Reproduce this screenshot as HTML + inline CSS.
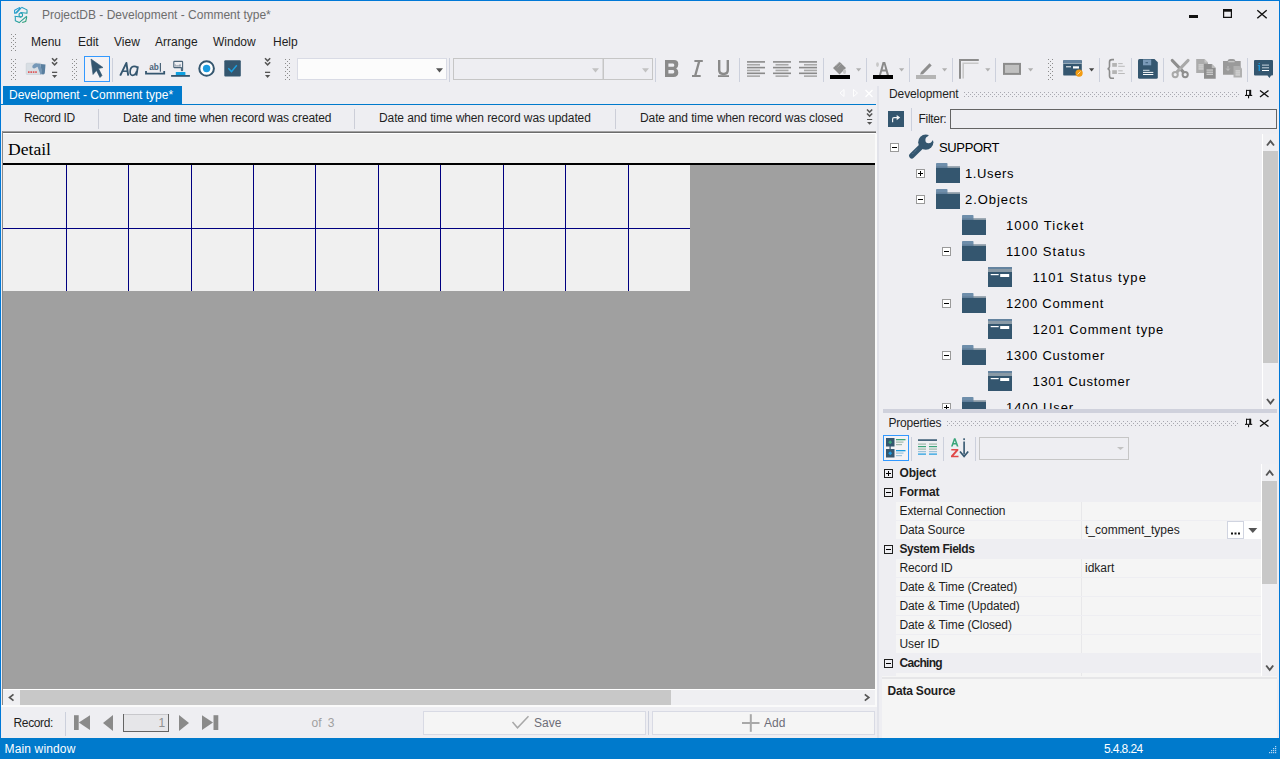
<!DOCTYPE html>
<html><head><meta charset="utf-8">
<style>
*{box-sizing:border-box;margin:0;padding:0}
html,body{width:1280px;height:759px;overflow:hidden;background:#eeeef2;font-family:"Liberation Sans",sans-serif;font-size:12px;color:#1e1e1e}
.a{position:absolute}
.t{position:absolute;white-space:nowrap;line-height:1}
#win{position:absolute;left:0;top:0;width:1280px;height:759px;border:1px solid #0078d7;border-bottom:none;background:#eeeef2}
.grip{position:absolute;width:6px;background-image:radial-gradient(circle at 1px 1px,#999 0.7px,transparent 0.8px);background-size:4px 4px}
.sep{position:absolute;width:1px;background:#ccced8}
</style></head><body>
<div id="win"></div>

<!-- title bar -->
<svg class="a" style="left:10px;top:4px" width="22" height="22" viewBox="10 4 22 22">
 <defs><linearGradient id="lg" x1="14" y1="7" x2="27" y2="23" gradientUnits="userSpaceOnUse"><stop offset="0" stop-color="#1e98e0"/><stop offset="0.55" stop-color="#22a0b0"/><stop offset="1" stop-color="#2d9e62"/></linearGradient></defs>
 <g fill="none" stroke="url(#lg)" stroke-width="1.05" stroke-linejoin="round">
  <path d="M14.6 10.2 L19.4 7.6 L20 8.4 L15.2 13.3 L14.6 13.3 Z"/>
  <path d="M21.6 7.3 L27 9.9 V13.2 L20.6 12.5"/>
  <path d="M16.2 13.4 L21.6 7.3"/>
  <path d="M19.1 14 L20.8 12.8 L22.5 14 V16 L20.8 17.2 L19.1 16 Z"/>
  <path d="M14.5 16.3 L20.6 17.1"/>
  <path d="M15.3 16.8 V20.8 L19.2 22.6 L26.8 16.2"/>
  <path d="M22.2 22.5 L25.7 21.6 L26.8 16.6"/>
 </g>
</svg>
<div class="t" style="left:42px;top:9px;font-size:12px;color:#6d6d6d">ProjectDB - Development - Comment type*</div>
<div class="a" style="left:1189px;top:15px;width:9px;height:3px;background:#111"></div>
<svg class="a" style="left:1222px;top:8px" width="12" height="12"><path d="M1.6 2.6 H9.4 V9.4 H1.6 Z" fill="none" stroke="#111" stroke-width="1.2"/><rect x="1" y="1" width="9" height="2.6" fill="#111"/></svg>
<svg class="a" style="left:1256px;top:9px" width="12" height="11"><path d="M1.3 1.2 L10.7 9.3 M10.7 1.2 L1.3 9.3" stroke="#111" stroke-width="1.4"/></svg>

<!-- menu bar -->
<div class="t" style="left:31px;top:36px">Menu</div>
<div class="t" style="left:78px;top:36px">Edit</div>
<div class="t" style="left:114px;top:36px">View</div>
<div class="t" style="left:155px;top:36px">Arrange</div>
<div class="t" style="left:213px;top:36px">Window</div>
<div class="t" style="left:273px;top:36px">Help</div>

<!-- toolbar -->
<!--TB--><svg class="a" style="left:0;top:0" width="1280" height="90" viewBox="0 0 1280 90"><rect x="11" y="34" width="1" height="1" fill="#8c8c8c"/><rect x="15" y="34" width="1" height="1" fill="#8c8c8c"/><rect x="13" y="36" width="1" height="1" fill="#8c8c8c"/><rect x="11" y="38" width="1" height="1" fill="#8c8c8c"/><rect x="15" y="38" width="1" height="1" fill="#8c8c8c"/><rect x="13" y="40" width="1" height="1" fill="#8c8c8c"/><rect x="11" y="42" width="1" height="1" fill="#8c8c8c"/><rect x="15" y="42" width="1" height="1" fill="#8c8c8c"/><rect x="13" y="44" width="1" height="1" fill="#8c8c8c"/><rect x="11" y="46" width="1" height="1" fill="#8c8c8c"/><rect x="15" y="46" width="1" height="1" fill="#8c8c8c"/><rect x="13" y="48" width="1" height="1" fill="#8c8c8c"/><rect x="11" y="50" width="1" height="1" fill="#8c8c8c"/><rect x="15" y="50" width="1" height="1" fill="#8c8c8c"/><rect x="11" y="59" width="1" height="1" fill="#8c8c8c"/><rect x="15" y="59" width="1" height="1" fill="#8c8c8c"/><rect x="13" y="61" width="1" height="1" fill="#8c8c8c"/><rect x="11" y="63" width="1" height="1" fill="#8c8c8c"/><rect x="15" y="63" width="1" height="1" fill="#8c8c8c"/><rect x="13" y="65" width="1" height="1" fill="#8c8c8c"/><rect x="11" y="67" width="1" height="1" fill="#8c8c8c"/><rect x="15" y="67" width="1" height="1" fill="#8c8c8c"/><rect x="13" y="69" width="1" height="1" fill="#8c8c8c"/><rect x="11" y="71" width="1" height="1" fill="#8c8c8c"/><rect x="15" y="71" width="1" height="1" fill="#8c8c8c"/><rect x="13" y="73" width="1" height="1" fill="#8c8c8c"/><rect x="11" y="75" width="1" height="1" fill="#8c8c8c"/><rect x="15" y="75" width="1" height="1" fill="#8c8c8c"/><rect x="13" y="77" width="1" height="1" fill="#8c8c8c"/><rect x="11" y="79" width="1" height="1" fill="#8c8c8c"/><rect x="15" y="79" width="1" height="1" fill="#8c8c8c"/><rect x="26.2" y="63.2" width="15" height="11.3" rx="0.8" fill="#d8dee4" stroke="#c8ced4" stroke-width="0.6"/><rect x="28" y="71.3" width="1.6" height="1.6" fill="#e04a4a"/><rect x="30.4" y="71.3" width="1.6" height="1.6" fill="#e04a4a"/><rect x="32.8" y="71.3" width="1.6" height="1.6" fill="#e04a4a"/><rect x="35.2" y="71.3" width="1.6" height="1.6" fill="#e04a4a"/><path d="M32.3 67.3 Q32 65.6 33.6 64.4 Q35 63.2 37.2 63.4 L40.2 63.8 L42.2 73.5 Q41.6 74.8 40.4 74.2 L37.5 66.8 L34.8 68.3 Q33 68.8 32.3 67.3 Z" fill="#7598b8"/><path d="M40.5 64.1 L45.5 64.6 L44.8 73.2 Q44 74.8 42 74.3 Z" fill="#5a7f9f"/><path d="M52 58.3 l2.6 2.6 l2.6 -2.6 M52 62.3 l2.6 2.6 l2.6 -2.6" fill="none" stroke="#555" stroke-width="1.5"/><rect x="52" y="71.7" width="5.2" height="1.3" fill="#555"/><path d="M52 75.1 h5.2 l-2.6 2.9 z" fill="#555"/><rect x="72" y="59" width="1" height="1" fill="#8c8c8c"/><rect x="76" y="59" width="1" height="1" fill="#8c8c8c"/><rect x="74" y="61" width="1" height="1" fill="#8c8c8c"/><rect x="72" y="63" width="1" height="1" fill="#8c8c8c"/><rect x="76" y="63" width="1" height="1" fill="#8c8c8c"/><rect x="74" y="65" width="1" height="1" fill="#8c8c8c"/><rect x="72" y="67" width="1" height="1" fill="#8c8c8c"/><rect x="76" y="67" width="1" height="1" fill="#8c8c8c"/><rect x="74" y="69" width="1" height="1" fill="#8c8c8c"/><rect x="72" y="71" width="1" height="1" fill="#8c8c8c"/><rect x="76" y="71" width="1" height="1" fill="#8c8c8c"/><rect x="74" y="73" width="1" height="1" fill="#8c8c8c"/><rect x="72" y="75" width="1" height="1" fill="#8c8c8c"/><rect x="76" y="75" width="1" height="1" fill="#8c8c8c"/><rect x="74" y="77" width="1" height="1" fill="#8c8c8c"/><rect x="72" y="79" width="1" height="1" fill="#8c8c8c"/><rect x="76" y="79" width="1" height="1" fill="#8c8c8c"/><rect x="84.5" y="56.5" width="25" height="25" fill="#f4f2f4" stroke="#3399ff" stroke-width="1"/><path d="M91 59 L103 67.5 L98.5 68.5 L102 75.5 L100 77.5 L96.5 70.5 L93 74.5 Z" fill="#34566f" stroke="#34566f" stroke-width="0.6" stroke-linejoin="round"/><rect x="112" y="58" width="1" height="24" fill="#ccd0dc"/><path d="M120.2 75.6 L126.4 62.9 L128.2 75.6" fill="none" stroke="#34566f" stroke-width="1.9" stroke-linejoin="round"/><path d="M122.6 71.2 H127.6" stroke="#34566f" stroke-width="1.5"/><path d="M137.9 66.3 L136.4 75.6" stroke="#34566f" stroke-width="1.8"/><path d="M137.3 67.5 Q136 66.2 134 66.3 Q130.3 66.6 130.1 71.5 Q130 75.3 132.6 75.3 Q135.6 75.3 136.8 71" fill="none" stroke="#34566f" stroke-width="1.7"/><text x="149.2" y="69.8" font-family="Liberation Sans" font-weight="bold" font-size="8.2" fill="#4a6378">ab</text><rect x="159.8" y="63" width="1.2" height="8.7" fill="#4a6378"/><path d="M146 70.9 V73.7 H164.2 V70.9" fill="none" stroke="#34566f" stroke-width="1.8"/><path d="M174.3 61.4 H182 Q182.6 61.4 182.6 62 V70.2 Q182.6 70.8 182 70.8 Q181.4 70.8 181.4 70.2 V67.6 H174.3 Q173.8 67.6 173.8 67 V62 Q173.8 61.4 174.3 61.4 Z" fill="none" stroke="#4a6378" stroke-width="1.1" stroke-linejoin="round"/><path d="M175.2 64.3 V66.6 M176.2 65.2 V66.6 M177.3 65.2 V66.6 M178.3 65.2 V66.6 M179.4 64.6 V66.6 M180.3 64.3 V66.6" stroke="#6e8192" stroke-width="0.7"/><rect x="175.8" y="71.9" width="9.6" height="3.3" rx="0.5" fill="#0ea0e0"/><rect x="171.1" y="75" width="18.8" height="1.8" fill="#34566f"/><circle cx="206.6" cy="68.5" r="7.3" fill="#fff" stroke="#34566f" stroke-width="2"/><circle cx="206.6" cy="68.5" r="3.7" fill="#1a9be0"/><rect x="224.3" y="60.3" width="16.5" height="16.3" rx="1" fill="#34566f"/><path d="M228.3 68.3 L231.5 71.6 L236.8 65.3" fill="none" stroke="#1ba1e2" stroke-width="1.4"/><path d="M265 58.3 l2.6 2.6 l2.6 -2.6 M265 62.3 l2.6 2.6 l2.6 -2.6" fill="none" stroke="#555" stroke-width="1.5"/><rect x="265" y="71.7" width="5.2" height="1.3" fill="#555"/><path d="M265 75.1 h5.2 l-2.6 2.9 z" fill="#555"/><rect x="285" y="59" width="1" height="1" fill="#8c8c8c"/><rect x="289" y="59" width="1" height="1" fill="#8c8c8c"/><rect x="287" y="61" width="1" height="1" fill="#8c8c8c"/><rect x="285" y="63" width="1" height="1" fill="#8c8c8c"/><rect x="289" y="63" width="1" height="1" fill="#8c8c8c"/><rect x="287" y="65" width="1" height="1" fill="#8c8c8c"/><rect x="285" y="67" width="1" height="1" fill="#8c8c8c"/><rect x="289" y="67" width="1" height="1" fill="#8c8c8c"/><rect x="287" y="69" width="1" height="1" fill="#8c8c8c"/><rect x="285" y="71" width="1" height="1" fill="#8c8c8c"/><rect x="289" y="71" width="1" height="1" fill="#8c8c8c"/><rect x="287" y="73" width="1" height="1" fill="#8c8c8c"/><rect x="285" y="75" width="1" height="1" fill="#8c8c8c"/><rect x="289" y="75" width="1" height="1" fill="#8c8c8c"/><rect x="287" y="77" width="1" height="1" fill="#8c8c8c"/><rect x="285" y="79" width="1" height="1" fill="#8c8c8c"/><rect x="289" y="79" width="1" height="1" fill="#8c8c8c"/><rect x="297.5" y="58.5" width="149" height="21" fill="#fcfcfc" stroke="#d9dbe5"/><path d="M436 68.2 h7 l-3.5 4.2 z" fill="#555"/><rect x="449" y="58" width="1" height="24" fill="#ccd0dc"/><rect x="453.5" y="58.5" width="149.5" height="21" fill="#eeeef2" stroke="#c6c6c6"/><path d="M592 68.2 h7 l-3.5 4.2 z" fill="#c2c2c2"/><rect x="603.5" y="58.5" width="49" height="21" fill="#eeeef2" stroke="#c6c6c6"/><path d="M642 68.2 h7 l-3.5 4.2 z" fill="#c2c2c2"/><rect x="655" y="58" width="1" height="24" fill="#ccd0dc"/><path fill-rule="evenodd" fill="#8a8a8a" d="M665 60 H674 Q678.3 60 678.3 64.2 Q678.3 67.3 676.2 68.4 Q678.3 69.5 678.3 72.6 Q678.3 77 673.5 77 H665 Z M668.4 63.6 V66.8 H673 Q674.3 66.8 674.3 65.2 Q674.3 63.6 673 63.6 Z M668.4 70 V73.4 H673 Q674.3 73.4 674.3 71.7 Q674.3 70 673 70 Z"/><path fill="#8a8a8a" d="M694.4 60 H702.8 V62 H700.2 L696.6 75 H700.7 V77 H692 V75 H694.2 L697.8 62 H694.4 Z"/><path fill="none" stroke="#8a8a8a" stroke-width="2.4" d="M719.2 60 V70 Q719.2 74 723.5 74 Q727.8 74 727.8 70 V60"/><rect x="718" y="75.2" width="11" height="1.8" fill="#8a8a8a"/><rect x="739" y="58" width="1" height="24" fill="#ccd0dc"/><rect x="747" y="61.10" width="18" height="1.6" fill="#8a8a8a"/><rect x="747" y="63.95" width="13" height="1.6" fill="#a8a8a8"/><rect x="747" y="66.80" width="18" height="1.6" fill="#8a8a8a"/><rect x="747" y="69.65" width="13" height="1.6" fill="#a8a8a8"/><rect x="747" y="72.50" width="18" height="1.6" fill="#8a8a8a"/><rect x="747" y="75.35" width="13" height="1.6" fill="#a8a8a8"/><rect x="773" y="61.10" width="18" height="1.6" fill="#8a8a8a"/><rect x="775.5" y="63.95" width="13" height="1.6" fill="#a8a8a8"/><rect x="773" y="66.80" width="18" height="1.6" fill="#8a8a8a"/><rect x="775.5" y="69.65" width="13" height="1.6" fill="#a8a8a8"/><rect x="773" y="72.50" width="18" height="1.6" fill="#8a8a8a"/><rect x="775.5" y="75.35" width="13" height="1.6" fill="#a8a8a8"/><rect x="799" y="61.10" width="18" height="1.6" fill="#8a8a8a"/><rect x="804" y="63.95" width="13" height="1.6" fill="#a8a8a8"/><rect x="799" y="66.80" width="18" height="1.6" fill="#8a8a8a"/><rect x="804" y="69.65" width="13" height="1.6" fill="#a8a8a8"/><rect x="799" y="72.50" width="18" height="1.6" fill="#8a8a8a"/><rect x="804" y="75.35" width="13" height="1.6" fill="#a8a8a8"/><rect x="823" y="58" width="1" height="24" fill="#ccd0dc"/><path d="M833 68 L839.5 61.8 L846 68 L839.5 74.5 Z" fill="#8e8e8e"/><path d="M836 66 l4 -4 M837.5 67.5 l4 -4" stroke="#b0b0b0" stroke-width="0.6"/><ellipse cx="844.5" cy="71.5" rx="1.6" ry="2.6" fill="#c8c8c8"/><rect x="830" y="75" width="20" height="4" fill="#000"/><path d="M856 68.3 h5.2 l-2.6 3.12 z" fill="#b0b0b0"/><rect x="866" y="58" width="1" height="24" fill="#ccd0dc"/><path d="M879 75 L882.6 62 H885.2 L889 75 H886.8 L885.8 71.5 H882 L881 75 Z M882.6 69.5 H885.3 L884 64.5 Z" fill="#8a8a8a" fill-rule="evenodd"/><ellipse cx="877.5" cy="64.6" rx="1.4" ry="2.4" fill="#c8c8c8"/><rect x="873" y="75" width="20" height="4" fill="#000"/><path d="M899 68.3 h5.2 l-2.6 3.12 z" fill="#b0b0b0"/><rect x="909" y="58" width="1" height="24" fill="#ccd0dc"/><path d="M921 72 L929.5 63.2 L931.7 65.5 L923 74.2 L920 74.5 Z" fill="#8e8e8e"/><rect x="916" y="75" width="20" height="4" fill="#b4b4b4"/><path d="M942 68.3 h5.2 l-2.6 3.12 z" fill="#b0b0b0"/><rect x="952" y="58" width="1" height="24" fill="#ccd0dc"/><path d="M960 78.7 V60 H978.8" fill="none" stroke="#8c8c8c" stroke-width="2"/><path d="M963.2 78.5 V63.2 H978.5" fill="none" stroke="#c8c8c8" stroke-width="1.6"/><path d="M985.2 68.3 h5.2 l-2.6 3.12 z" fill="#b0b0b0"/><rect x="995" y="58" width="1" height="24" fill="#ccd0dc"/><rect x="1004" y="63.9" width="16" height="10" fill="#c0c0c0" stroke="#8c8c8c" stroke-width="2"/><path d="M1028 68.3 h5.2 l-2.6 3.12 z" fill="#b0b0b0"/><rect x="1048" y="59" width="1" height="1" fill="#8c8c8c"/><rect x="1052" y="59" width="1" height="1" fill="#8c8c8c"/><rect x="1050" y="61" width="1" height="1" fill="#8c8c8c"/><rect x="1048" y="63" width="1" height="1" fill="#8c8c8c"/><rect x="1052" y="63" width="1" height="1" fill="#8c8c8c"/><rect x="1050" y="65" width="1" height="1" fill="#8c8c8c"/><rect x="1048" y="67" width="1" height="1" fill="#8c8c8c"/><rect x="1052" y="67" width="1" height="1" fill="#8c8c8c"/><rect x="1050" y="69" width="1" height="1" fill="#8c8c8c"/><rect x="1048" y="71" width="1" height="1" fill="#8c8c8c"/><rect x="1052" y="71" width="1" height="1" fill="#8c8c8c"/><rect x="1050" y="73" width="1" height="1" fill="#8c8c8c"/><rect x="1048" y="75" width="1" height="1" fill="#8c8c8c"/><rect x="1052" y="75" width="1" height="1" fill="#8c8c8c"/><rect x="1050" y="77" width="1" height="1" fill="#8c8c8c"/><rect x="1048" y="79" width="1" height="1" fill="#8c8c8c"/><rect x="1052" y="79" width="1" height="1" fill="#8c8c8c"/><rect x="1063.2" y="60" width="18.6" height="15.6" rx="1.2" fill="#34566f"/><rect x="1063.2" y="60" width="18.6" height="3" rx="1" fill="#64839f"/><rect x="1063.2" y="63" width="18.6" height="0.7" fill="#c4d0da"/><rect x="1066" y="66.3" width="5" height="1" fill="#fff"/><rect x="1073" y="66.3" width="6" height="2.2" fill="#fff"/><circle cx="1079.1" cy="73.1" r="3.6" fill="#f39c12"/><path d="M1077.5 74.5 l3 -3" stroke="#fde3b5" stroke-width="1"/><path d="M1089 68.3 h5.2 l-2.6 3.12 z" fill="#444"/><rect x="1099" y="58" width="1" height="24" fill="#ccd0dc"/><path d="M1114 59.6 H1112 Q1109.5 59.6 1109.5 62 V66.5 Q1109.5 68.5 1107.6 68.8 Q1109.5 69.2 1109.5 71.2 V76 Q1109.5 78.3 1112 78.3 H1114" fill="none" stroke="#8c8c8c" stroke-width="1.6"/><rect x="1112.2" y="63" width="4.7" height="3.8" fill="#b4b4b4"/><rect x="1112.2" y="70.2" width="4.7" height="3.8" fill="#b4b4b4"/><rect x="1118.2" y="63.2" width="4.5" height="0.9" fill="#b4b4b4"/><rect x="1118.2" y="65.8" width="6.6" height="0.9" fill="#b4b4b4"/><rect x="1118.2" y="70.4" width="4.5" height="0.9" fill="#b4b4b4"/><rect x="1118.2" y="73" width="6.6" height="0.9" fill="#b4b4b4"/><rect x="1131" y="58" width="1" height="24" fill="#ccd0dc"/><path d="M1139.5 59 H1154.5 L1157.8 62.3 V77.2 Q1157.8 78.7 1156.3 78.7 H1139.5 Q1138 78.7 1138 77.2 V60.5 Q1138 59 1139.5 59 Z" fill="#34566f"/><rect x="1143" y="59.5" width="8.2" height="5.8" fill="#7a9ab8"/><rect x="1145.5" y="62.3" width="2.5" height="0.9" fill="#34566f"/><rect x="1143" y="69.8" width="6.5" height="1" fill="#d6e0e8"/><rect x="1143" y="71.9" width="10.3" height="1" fill="#fff"/><rect x="1143" y="74" width="10.3" height="1" fill="#fff"/><rect x="1163" y="58" width="1" height="24" fill="#ccd0dc"/><path d="M1172.3 60.5 L1183 71.6" stroke="#8e8e8e" stroke-width="3.2" stroke-linecap="round"/><path d="M1188 60.5 L1177.3 71.6" stroke="#a8a8a8" stroke-width="3.2" stroke-linecap="round"/><circle cx="1175.2" cy="74.6" r="2.6" fill="none" stroke="#a8a8a8" stroke-width="2"/><circle cx="1185.2" cy="74.6" r="2.6" fill="none" stroke="#8e8e8e" stroke-width="2"/><circle cx="1180.2" cy="69" r="0.7" fill="#c8c8c8"/><path d="M1196.2 59 H1204.5 L1208 62.5 V73 H1196.2 Z" fill="#acacac"/><path d="M1204.5 59 V62.5 H1208 Z" fill="#c8c8c8"/><rect x="1198.5" y="64.5" width="5" height="0.9" fill="#e8e8e8"/><rect x="1198.5" y="66.5" width="5" height="0.9" fill="#e8e8e8"/><rect x="1198.5" y="68.5" width="5" height="0.9" fill="#e8e8e8"/><path d="M1204 64 H1211.8 L1215.7 67.9 V78.7 H1204 Z" fill="#8e8e8e"/><path d="M1211.8 64 V67.9 H1215.7 Z" fill="#bdbdbd"/><rect x="1206.5" y="69.6" width="6.5" height="0.9" fill="#e6e6e6"/><rect x="1206.5" y="71.7" width="6.5" height="0.9" fill="#e6e6e6"/><rect x="1206.5" y="73.8" width="6.5" height="0.9" fill="#e6e6e6"/><path d="M1223 61 H1227.5 Q1228 59 1230 59 H1233 Q1235 59 1235.5 61 H1240.7 V74.8 H1223 Z" fill="#9a9a9a"/><rect x="1228.3" y="61" width="6.3" height="1.3" fill="#c6c6c6"/><path d="M1228 66 V70.2 M1226.3 68.6 L1228 70.5 L1229.7 68.6" stroke="#c8c8c8" stroke-width="0.8" fill="none"/><path d="M1233.5 66 H1239.5 L1242 68.5 V77.6 H1233.5 Z" fill="#b0b0b0"/><rect x="1235.5" y="70.5" width="4.5" height="0.9" fill="#e8e8e8"/><rect x="1235.5" y="72.5" width="4.5" height="0.9" fill="#e8e8e8"/><rect x="1235.5" y="74.5" width="4.5" height="0.9" fill="#e8e8e8"/><rect x="1247" y="58" width="1" height="24" fill="#ccd0dc"/><path d="M1255 60 H1272 Q1273 60 1273 61 V74.6 Q1273 75.6 1272 75.6 H1271 L1269.5 78 L1267.5 75.6 H1255 Q1254 75.6 1254 74.6 V61 Q1254 60 1255 60 Z" fill="#34566f"/><rect x="1258.6" y="65" width="1.3" height="6" fill="#1a9be0"/><rect x="1258.6" y="63" width="1.3" height="1" fill="#1a9be0"/><rect x="1257.8" y="65" width="1.2" height="0.9" fill="#1a9be0"/><rect x="1262" y="64.6" width="7" height="1" fill="#c9d5df"/><rect x="1262" y="67.3" width="7" height="1" fill="#c9d5df"/><rect x="1262" y="70" width="7" height="1" fill="#fff"/></svg><!--/TB-->

<!-- document tab -->
<div class="a" style="left:3px;top:86px;width:179px;height:18px;background:#007acc"></div>
<div class="t" style="left:9px;top:89px;color:#fff">Development - Comment type*</div>
<div class="a" style="left:0;top:104px;width:876px;height:2px;background:#007acc"></div>

<!-- header row -->
<div class="a" style="left:1px;top:105px;width:875px;height:26px;background:#eeeef2"></div>
<div class="t" style="left:24px;top:112px;letter-spacing:-0.35px">Record ID</div>
<div class="sep" style="left:98px;top:109px;height:20px"></div>
<div class="t" style="left:123px;top:112px;letter-spacing:-0.1px">Date and time when record was created</div>
<div class="sep" style="left:354px;top:109px;height:20px"></div>
<div class="t" style="left:379px;top:112px;letter-spacing:-0.1px">Date and time when record was updated</div>
<div class="sep" style="left:615px;top:109px;height:20px"></div>
<div class="t" style="left:640px;top:112px;letter-spacing:-0.1px">Date and time when record was closed</div>
<svg class="a" style="left:866px;top:108px" width="8" height="20" viewBox="0 0 8 20"><path d="M1 1.5 L3.6 4.1 L6.2 1.5 M1 5.5 L3.6 8.1 L6.2 5.5" fill="none" stroke="#555" stroke-width="1.5"/><rect x="1" y="11" width="5.2" height="1" fill="#555"/><path d="M1 13.9 H6.2 L3.6 16.8 Z" fill="#555"/></svg>


<!-- designer -->
<div class="a" style="left:2px;top:131px;width:874px;height:1px;background:#a2a2a2"></div><div class="a" style="left:2px;top:132px;width:874px;height:1px;background:#6c6c6c"></div>
<div class="a" style="left:2px;top:131px;width:1px;height:574px;background:#8a8a8a"></div>
<div class="a" style="left:3px;top:133px;width:873px;height:1px;background:#fff"></div>
<div class="a" style="left:3px;top:134px;width:872px;height:29px;background:#f0f0f0"></div>
<div class="t" style="left:8px;top:140.5px;font-family:'Liberation Serif',serif;font-size:17.6px;color:#000">Detail</div>
<div class="a" style="left:3px;top:163px;width:873px;height:2px;background:#000"></div>
<div class="a" style="left:3px;top:165px;width:873px;height:524px;background:#a0a0a0"></div>
<div class="a" style="left:3px;top:165px;width:687px;height:126px;background:#f0f0f0"></div>
<div class="a" style="left:3px;top:228px;width:687px;height:1px;background:#000080"></div>
<div class="a" style="left:66px;top:165px;width:1px;height:126px;background:#000080"></div>
<div class="a" style="left:128px;top:165px;width:1px;height:126px;background:#000080"></div>
<div class="a" style="left:191px;top:165px;width:1px;height:126px;background:#000080"></div>
<div class="a" style="left:253px;top:165px;width:1px;height:126px;background:#000080"></div>
<div class="a" style="left:315px;top:165px;width:1px;height:126px;background:#000080"></div>
<div class="a" style="left:378px;top:165px;width:1px;height:126px;background:#000080"></div>
<div class="a" style="left:440px;top:165px;width:1px;height:126px;background:#000080"></div>
<div class="a" style="left:503px;top:165px;width:1px;height:126px;background:#000080"></div>
<div class="a" style="left:565px;top:165px;width:1px;height:126px;background:#000080"></div>
<div class="a" style="left:628px;top:165px;width:1px;height:126px;background:#000080"></div>


<!-- nav -->
<!--N--><svg class="a" style="left:0;top:0" width="880" height="759" viewBox="0 0 880 759">
<rect x="3" y="689" width="873" height="1" fill="#fff"/>
<rect x="3" y="690" width="872" height="15" fill="#efeff2"/>
<rect x="20" y="690" width="651" height="15" fill="#c8c8c8"/>
<path d="M13.5 694.3 L9.5 697.5 L13.5 700.7" fill="none" stroke="#555" stroke-width="1.7"/>
<path d="M864.8 694.3 L868.8 697.5 L864.8 700.7" fill="none" stroke="#555" stroke-width="1.7"/>
<rect x="875" y="134" width="2" height="573" fill="#fafafa"/>
<rect x="1" y="705" width="876" height="2" fill="#fafafa"/>
<rect x="65" y="712" width="1" height="24" fill="#ccd0dc"/>
<rect x="74" y="715.2" width="4.7" height="14.8" fill="#8a8a8a"/><path d="M78.8 722.6 L90 715.2 V730 Z" fill="#8a8a8a"/>
<path d="M103 723 L113 715 V731 Z" fill="#8a8a8a"/>
<rect x="123.5" y="714.5" width="45" height="17" fill="#e6e6e9" stroke="#646464"/>
<rect x="124" y="714" width="44" height="1" fill="#c8c8cc"/>
<path d="M179 715 L189 723 L179 731 Z" fill="#8a8a8a"/>
<path d="M202 715.2 L213 722.6 L202 730 Z" fill="#8a8a8a"/><rect x="213.5" y="715.2" width="4.8" height="14.8" fill="#8a8a8a"/>
<rect x="423.5" y="711.5" width="222" height="23" fill="#f5f5f5" stroke="#d8dae4"/>
<path d="M512.5 722 L517.5 727.8 L528.5 716.3" fill="none" stroke="#a8a8a8" stroke-width="1.5"/>
<rect x="648" y="711" width="1" height="24" fill="#ccd0dc"/>
<rect x="652.5" y="711.5" width="222" height="23" fill="#f5f5f5" stroke="#d8dae4"/>
<rect x="742" y="722" width="17.5" height="2" fill="#a8a8a8"/><rect x="749.8" y="714.2" width="2" height="17.6" fill="#a8a8a8"/>
<path d="M844 89.5 L840 93 L844 96.5 Z" fill="none" stroke="#fff" stroke-width="0.9"/>
<path d="M853.5 89.5 L857.5 93 L853.5 96.5 Z" fill="none" stroke="#fff" stroke-width="0.9"/>
<path d="M865.5 90 L872.5 97 M872.5 90 L865.5 97" stroke="#fff" stroke-width="1.3"/>
</svg>
<div class="t" style="left:13.5px;top:716.6px;letter-spacing:-0.35px">Record:</div>
<div class="t" style="left:158.5px;top:716.5px;color:#909090">1</div>
<div class="t" style="left:311.5px;top:717px;color:#a0a0a0;word-spacing:3px">of 3</div>
<div class="t" style="left:534px;top:716.7px;color:#6d6d78">Save</div>
<div class="t" style="left:764px;top:716.7px;color:#6d6d78">Add</div>
<!--/N-->

<!-- right panel -->
<!--R--><svg class="a" style="left:0;top:0" width="1280" height="759" viewBox="0 0 1280 759"><rect x="877" y="86" width="2" height="652" fill="#e2e3ea"/><rect x="964" y="92" width="1" height="1" fill="#a8a8b0"/><rect x="968" y="92" width="1" height="1" fill="#a8a8b0"/><rect x="972" y="92" width="1" height="1" fill="#a8a8b0"/><rect x="976" y="92" width="1" height="1" fill="#a8a8b0"/><rect x="980" y="92" width="1" height="1" fill="#a8a8b0"/><rect x="984" y="92" width="1" height="1" fill="#a8a8b0"/><rect x="988" y="92" width="1" height="1" fill="#a8a8b0"/><rect x="992" y="92" width="1" height="1" fill="#a8a8b0"/><rect x="996" y="92" width="1" height="1" fill="#a8a8b0"/><rect x="1000" y="92" width="1" height="1" fill="#a8a8b0"/><rect x="1004" y="92" width="1" height="1" fill="#a8a8b0"/><rect x="1008" y="92" width="1" height="1" fill="#a8a8b0"/><rect x="1012" y="92" width="1" height="1" fill="#a8a8b0"/><rect x="1016" y="92" width="1" height="1" fill="#a8a8b0"/><rect x="1020" y="92" width="1" height="1" fill="#a8a8b0"/><rect x="1024" y="92" width="1" height="1" fill="#a8a8b0"/><rect x="1028" y="92" width="1" height="1" fill="#a8a8b0"/><rect x="1032" y="92" width="1" height="1" fill="#a8a8b0"/><rect x="1036" y="92" width="1" height="1" fill="#a8a8b0"/><rect x="1040" y="92" width="1" height="1" fill="#a8a8b0"/><rect x="1044" y="92" width="1" height="1" fill="#a8a8b0"/><rect x="1048" y="92" width="1" height="1" fill="#a8a8b0"/><rect x="1052" y="92" width="1" height="1" fill="#a8a8b0"/><rect x="1056" y="92" width="1" height="1" fill="#a8a8b0"/><rect x="1060" y="92" width="1" height="1" fill="#a8a8b0"/><rect x="1064" y="92" width="1" height="1" fill="#a8a8b0"/><rect x="1068" y="92" width="1" height="1" fill="#a8a8b0"/><rect x="1072" y="92" width="1" height="1" fill="#a8a8b0"/><rect x="1076" y="92" width="1" height="1" fill="#a8a8b0"/><rect x="1080" y="92" width="1" height="1" fill="#a8a8b0"/><rect x="1084" y="92" width="1" height="1" fill="#a8a8b0"/><rect x="1088" y="92" width="1" height="1" fill="#a8a8b0"/><rect x="1092" y="92" width="1" height="1" fill="#a8a8b0"/><rect x="1096" y="92" width="1" height="1" fill="#a8a8b0"/><rect x="1100" y="92" width="1" height="1" fill="#a8a8b0"/><rect x="1104" y="92" width="1" height="1" fill="#a8a8b0"/><rect x="1108" y="92" width="1" height="1" fill="#a8a8b0"/><rect x="1112" y="92" width="1" height="1" fill="#a8a8b0"/><rect x="1116" y="92" width="1" height="1" fill="#a8a8b0"/><rect x="1120" y="92" width="1" height="1" fill="#a8a8b0"/><rect x="1124" y="92" width="1" height="1" fill="#a8a8b0"/><rect x="1128" y="92" width="1" height="1" fill="#a8a8b0"/><rect x="1132" y="92" width="1" height="1" fill="#a8a8b0"/><rect x="1136" y="92" width="1" height="1" fill="#a8a8b0"/><rect x="1140" y="92" width="1" height="1" fill="#a8a8b0"/><rect x="1144" y="92" width="1" height="1" fill="#a8a8b0"/><rect x="1148" y="92" width="1" height="1" fill="#a8a8b0"/><rect x="1152" y="92" width="1" height="1" fill="#a8a8b0"/><rect x="1156" y="92" width="1" height="1" fill="#a8a8b0"/><rect x="1160" y="92" width="1" height="1" fill="#a8a8b0"/><rect x="1164" y="92" width="1" height="1" fill="#a8a8b0"/><rect x="1168" y="92" width="1" height="1" fill="#a8a8b0"/><rect x="1172" y="92" width="1" height="1" fill="#a8a8b0"/><rect x="1176" y="92" width="1" height="1" fill="#a8a8b0"/><rect x="1180" y="92" width="1" height="1" fill="#a8a8b0"/><rect x="1184" y="92" width="1" height="1" fill="#a8a8b0"/><rect x="1188" y="92" width="1" height="1" fill="#a8a8b0"/><rect x="1192" y="92" width="1" height="1" fill="#a8a8b0"/><rect x="1196" y="92" width="1" height="1" fill="#a8a8b0"/><rect x="1200" y="92" width="1" height="1" fill="#a8a8b0"/><rect x="1204" y="92" width="1" height="1" fill="#a8a8b0"/><rect x="1208" y="92" width="1" height="1" fill="#a8a8b0"/><rect x="1212" y="92" width="1" height="1" fill="#a8a8b0"/><rect x="1216" y="92" width="1" height="1" fill="#a8a8b0"/><rect x="1220" y="92" width="1" height="1" fill="#a8a8b0"/><rect x="1224" y="92" width="1" height="1" fill="#a8a8b0"/><rect x="1228" y="92" width="1" height="1" fill="#a8a8b0"/><rect x="1232" y="92" width="1" height="1" fill="#a8a8b0"/><rect x="1236" y="92" width="1" height="1" fill="#a8a8b0"/><rect x="966" y="94" width="1" height="1" fill="#a8a8b0"/><rect x="970" y="94" width="1" height="1" fill="#a8a8b0"/><rect x="974" y="94" width="1" height="1" fill="#a8a8b0"/><rect x="978" y="94" width="1" height="1" fill="#a8a8b0"/><rect x="982" y="94" width="1" height="1" fill="#a8a8b0"/><rect x="986" y="94" width="1" height="1" fill="#a8a8b0"/><rect x="990" y="94" width="1" height="1" fill="#a8a8b0"/><rect x="994" y="94" width="1" height="1" fill="#a8a8b0"/><rect x="998" y="94" width="1" height="1" fill="#a8a8b0"/><rect x="1002" y="94" width="1" height="1" fill="#a8a8b0"/><rect x="1006" y="94" width="1" height="1" fill="#a8a8b0"/><rect x="1010" y="94" width="1" height="1" fill="#a8a8b0"/><rect x="1014" y="94" width="1" height="1" fill="#a8a8b0"/><rect x="1018" y="94" width="1" height="1" fill="#a8a8b0"/><rect x="1022" y="94" width="1" height="1" fill="#a8a8b0"/><rect x="1026" y="94" width="1" height="1" fill="#a8a8b0"/><rect x="1030" y="94" width="1" height="1" fill="#a8a8b0"/><rect x="1034" y="94" width="1" height="1" fill="#a8a8b0"/><rect x="1038" y="94" width="1" height="1" fill="#a8a8b0"/><rect x="1042" y="94" width="1" height="1" fill="#a8a8b0"/><rect x="1046" y="94" width="1" height="1" fill="#a8a8b0"/><rect x="1050" y="94" width="1" height="1" fill="#a8a8b0"/><rect x="1054" y="94" width="1" height="1" fill="#a8a8b0"/><rect x="1058" y="94" width="1" height="1" fill="#a8a8b0"/><rect x="1062" y="94" width="1" height="1" fill="#a8a8b0"/><rect x="1066" y="94" width="1" height="1" fill="#a8a8b0"/><rect x="1070" y="94" width="1" height="1" fill="#a8a8b0"/><rect x="1074" y="94" width="1" height="1" fill="#a8a8b0"/><rect x="1078" y="94" width="1" height="1" fill="#a8a8b0"/><rect x="1082" y="94" width="1" height="1" fill="#a8a8b0"/><rect x="1086" y="94" width="1" height="1" fill="#a8a8b0"/><rect x="1090" y="94" width="1" height="1" fill="#a8a8b0"/><rect x="1094" y="94" width="1" height="1" fill="#a8a8b0"/><rect x="1098" y="94" width="1" height="1" fill="#a8a8b0"/><rect x="1102" y="94" width="1" height="1" fill="#a8a8b0"/><rect x="1106" y="94" width="1" height="1" fill="#a8a8b0"/><rect x="1110" y="94" width="1" height="1" fill="#a8a8b0"/><rect x="1114" y="94" width="1" height="1" fill="#a8a8b0"/><rect x="1118" y="94" width="1" height="1" fill="#a8a8b0"/><rect x="1122" y="94" width="1" height="1" fill="#a8a8b0"/><rect x="1126" y="94" width="1" height="1" fill="#a8a8b0"/><rect x="1130" y="94" width="1" height="1" fill="#a8a8b0"/><rect x="1134" y="94" width="1" height="1" fill="#a8a8b0"/><rect x="1138" y="94" width="1" height="1" fill="#a8a8b0"/><rect x="1142" y="94" width="1" height="1" fill="#a8a8b0"/><rect x="1146" y="94" width="1" height="1" fill="#a8a8b0"/><rect x="1150" y="94" width="1" height="1" fill="#a8a8b0"/><rect x="1154" y="94" width="1" height="1" fill="#a8a8b0"/><rect x="1158" y="94" width="1" height="1" fill="#a8a8b0"/><rect x="1162" y="94" width="1" height="1" fill="#a8a8b0"/><rect x="1166" y="94" width="1" height="1" fill="#a8a8b0"/><rect x="1170" y="94" width="1" height="1" fill="#a8a8b0"/><rect x="1174" y="94" width="1" height="1" fill="#a8a8b0"/><rect x="1178" y="94" width="1" height="1" fill="#a8a8b0"/><rect x="1182" y="94" width="1" height="1" fill="#a8a8b0"/><rect x="1186" y="94" width="1" height="1" fill="#a8a8b0"/><rect x="1190" y="94" width="1" height="1" fill="#a8a8b0"/><rect x="1194" y="94" width="1" height="1" fill="#a8a8b0"/><rect x="1198" y="94" width="1" height="1" fill="#a8a8b0"/><rect x="1202" y="94" width="1" height="1" fill="#a8a8b0"/><rect x="1206" y="94" width="1" height="1" fill="#a8a8b0"/><rect x="1210" y="94" width="1" height="1" fill="#a8a8b0"/><rect x="1214" y="94" width="1" height="1" fill="#a8a8b0"/><rect x="1218" y="94" width="1" height="1" fill="#a8a8b0"/><rect x="1222" y="94" width="1" height="1" fill="#a8a8b0"/><rect x="1226" y="94" width="1" height="1" fill="#a8a8b0"/><rect x="1230" y="94" width="1" height="1" fill="#a8a8b0"/><rect x="1234" y="94" width="1" height="1" fill="#a8a8b0"/><rect x="1238" y="94" width="1" height="1" fill="#a8a8b0"/><rect x="964" y="96" width="1" height="1" fill="#a8a8b0"/><rect x="968" y="96" width="1" height="1" fill="#a8a8b0"/><rect x="972" y="96" width="1" height="1" fill="#a8a8b0"/><rect x="976" y="96" width="1" height="1" fill="#a8a8b0"/><rect x="980" y="96" width="1" height="1" fill="#a8a8b0"/><rect x="984" y="96" width="1" height="1" fill="#a8a8b0"/><rect x="988" y="96" width="1" height="1" fill="#a8a8b0"/><rect x="992" y="96" width="1" height="1" fill="#a8a8b0"/><rect x="996" y="96" width="1" height="1" fill="#a8a8b0"/><rect x="1000" y="96" width="1" height="1" fill="#a8a8b0"/><rect x="1004" y="96" width="1" height="1" fill="#a8a8b0"/><rect x="1008" y="96" width="1" height="1" fill="#a8a8b0"/><rect x="1012" y="96" width="1" height="1" fill="#a8a8b0"/><rect x="1016" y="96" width="1" height="1" fill="#a8a8b0"/><rect x="1020" y="96" width="1" height="1" fill="#a8a8b0"/><rect x="1024" y="96" width="1" height="1" fill="#a8a8b0"/><rect x="1028" y="96" width="1" height="1" fill="#a8a8b0"/><rect x="1032" y="96" width="1" height="1" fill="#a8a8b0"/><rect x="1036" y="96" width="1" height="1" fill="#a8a8b0"/><rect x="1040" y="96" width="1" height="1" fill="#a8a8b0"/><rect x="1044" y="96" width="1" height="1" fill="#a8a8b0"/><rect x="1048" y="96" width="1" height="1" fill="#a8a8b0"/><rect x="1052" y="96" width="1" height="1" fill="#a8a8b0"/><rect x="1056" y="96" width="1" height="1" fill="#a8a8b0"/><rect x="1060" y="96" width="1" height="1" fill="#a8a8b0"/><rect x="1064" y="96" width="1" height="1" fill="#a8a8b0"/><rect x="1068" y="96" width="1" height="1" fill="#a8a8b0"/><rect x="1072" y="96" width="1" height="1" fill="#a8a8b0"/><rect x="1076" y="96" width="1" height="1" fill="#a8a8b0"/><rect x="1080" y="96" width="1" height="1" fill="#a8a8b0"/><rect x="1084" y="96" width="1" height="1" fill="#a8a8b0"/><rect x="1088" y="96" width="1" height="1" fill="#a8a8b0"/><rect x="1092" y="96" width="1" height="1" fill="#a8a8b0"/><rect x="1096" y="96" width="1" height="1" fill="#a8a8b0"/><rect x="1100" y="96" width="1" height="1" fill="#a8a8b0"/><rect x="1104" y="96" width="1" height="1" fill="#a8a8b0"/><rect x="1108" y="96" width="1" height="1" fill="#a8a8b0"/><rect x="1112" y="96" width="1" height="1" fill="#a8a8b0"/><rect x="1116" y="96" width="1" height="1" fill="#a8a8b0"/><rect x="1120" y="96" width="1" height="1" fill="#a8a8b0"/><rect x="1124" y="96" width="1" height="1" fill="#a8a8b0"/><rect x="1128" y="96" width="1" height="1" fill="#a8a8b0"/><rect x="1132" y="96" width="1" height="1" fill="#a8a8b0"/><rect x="1136" y="96" width="1" height="1" fill="#a8a8b0"/><rect x="1140" y="96" width="1" height="1" fill="#a8a8b0"/><rect x="1144" y="96" width="1" height="1" fill="#a8a8b0"/><rect x="1148" y="96" width="1" height="1" fill="#a8a8b0"/><rect x="1152" y="96" width="1" height="1" fill="#a8a8b0"/><rect x="1156" y="96" width="1" height="1" fill="#a8a8b0"/><rect x="1160" y="96" width="1" height="1" fill="#a8a8b0"/><rect x="1164" y="96" width="1" height="1" fill="#a8a8b0"/><rect x="1168" y="96" width="1" height="1" fill="#a8a8b0"/><rect x="1172" y="96" width="1" height="1" fill="#a8a8b0"/><rect x="1176" y="96" width="1" height="1" fill="#a8a8b0"/><rect x="1180" y="96" width="1" height="1" fill="#a8a8b0"/><rect x="1184" y="96" width="1" height="1" fill="#a8a8b0"/><rect x="1188" y="96" width="1" height="1" fill="#a8a8b0"/><rect x="1192" y="96" width="1" height="1" fill="#a8a8b0"/><rect x="1196" y="96" width="1" height="1" fill="#a8a8b0"/><rect x="1200" y="96" width="1" height="1" fill="#a8a8b0"/><rect x="1204" y="96" width="1" height="1" fill="#a8a8b0"/><rect x="1208" y="96" width="1" height="1" fill="#a8a8b0"/><rect x="1212" y="96" width="1" height="1" fill="#a8a8b0"/><rect x="1216" y="96" width="1" height="1" fill="#a8a8b0"/><rect x="1220" y="96" width="1" height="1" fill="#a8a8b0"/><rect x="1224" y="96" width="1" height="1" fill="#a8a8b0"/><rect x="1228" y="96" width="1" height="1" fill="#a8a8b0"/><rect x="1232" y="96" width="1" height="1" fill="#a8a8b0"/><rect x="1236" y="96" width="1" height="1" fill="#a8a8b0"/><rect x="1246" y="89.89999999999999" width="1" height="5.2" fill="#111"/><rect x="1249.2" y="89.89999999999999" width="2" height="5.2" fill="#111"/><rect x="1246" y="89.89999999999999" width="5" height="1" fill="#111"/><rect x="1245" y="94.89999999999999" width="7.2" height="1.1" fill="#111"/><rect x="1248" y="95.89999999999999" width="1.1" height="2.4" fill="#111"/><path d="M1260 90.5 L1268.5 97.0 M1268.5 90.5 L1260 97.0" stroke="#111" stroke-width="1.35"/><rect x="888" y="111" width="16" height="16" fill="#34566f"/><path d="M892.6 122.2 V119 Q892.6 117.6 894 117.6 H897.5" fill="none" stroke="#f2f4f6" stroke-width="1.2"/><path d="M896.7 114.9 L900.2 117.6 L896.7 120.3 Z" fill="#f2f4f6"/><rect x="911" y="108" width="1" height="23" fill="#ccd0dc"/><rect x="950.5" y="109.5" width="326" height="19" fill="#eeeef2" stroke="#646464"/><rect x="1262" y="134" width="1" height="275" fill="#fff"/><rect x="1263" y="134" width="15" height="275" fill="#efeff2"/><rect x="1263" y="151" width="15" height="212" fill="#c8c8c8"/><path d="M1267 145.5 L1270.5 141 L1274 145.5" fill="none" stroke="#555" stroke-width="1.9"/><path d="M1267 399 L1270.5 403.5 L1274 399" fill="none" stroke="#555" stroke-width="1.9"/><defs><mask id="wm" maskUnits="userSpaceOnUse" x="900" y="128" width="40" height="34"><rect x="900" y="128" width="40" height="34" fill="#fff"/><circle cx="928.6" cy="140" r="3.2" fill="#000"/><path d="M926.3 137.7 L931 133 L935.6 137.6 L930.9 142.3 Z" fill="#000"/></mask></defs><g mask="url(#wm)"><circle cx="925.8" cy="142.2" r="7.6" fill="#34566f"/><path d="M911.8 155.8 L921.5 146.3" stroke="#34566f" stroke-width="5.4" stroke-linecap="round"/></g><path d="M912.5 153.8 L917.6 148.8" stroke="#7d9ab3" stroke-width="0.6" stroke-dasharray="1.2 0.6"/><rect x="890.5" y="143.5" width="8" height="8" fill="#fff" stroke="#9a9a9a"/><rect x="892" y="147" width="5" height="1" fill="#000"/><rect x="916.5" y="169.5" width="8" height="8" fill="#fff" stroke="#9a9a9a"/><rect x="918" y="173" width="5" height="1" fill="#000"/><rect x="920" y="171" width="1" height="5" fill="#000"/><rect x="916.5" y="195.5" width="8" height="8" fill="#fff" stroke="#9a9a9a"/><rect x="918" y="199" width="5" height="1" fill="#000"/><rect x="942.5" y="247.5" width="8" height="8" fill="#fff" stroke="#9a9a9a"/><rect x="944" y="251" width="5" height="1" fill="#000"/><rect x="942.5" y="299.5" width="8" height="8" fill="#fff" stroke="#9a9a9a"/><rect x="944" y="303" width="5" height="1" fill="#000"/><rect x="942.5" y="351.5" width="8" height="8" fill="#fff" stroke="#9a9a9a"/><rect x="944" y="355" width="5" height="1" fill="#000"/><rect x="942.5" y="403.5" width="8" height="8" fill="#fff" stroke="#9a9a9a"/><rect x="944" y="407" width="5" height="1" fill="#000"/><rect x="946" y="405" width="1" height="5" fill="#000"/><rect x="936" y="163" width="11.5" height="3.5" rx="0.8" fill="#6e8eab"/><rect x="936" y="166.2" width="24" height="2" fill="#8a9aa6"/><rect x="936" y="166.2" width="11.5" height="2" fill="#5f7f9c"/><rect x="936" y="168" width="24" height="15" fill="#34566f"/><rect x="936" y="189" width="11.5" height="3.5" rx="0.8" fill="#6e8eab"/><rect x="936" y="192.2" width="24" height="2" fill="#8a9aa6"/><rect x="936" y="192.2" width="11.5" height="2" fill="#5f7f9c"/><rect x="936" y="194" width="24" height="15" fill="#34566f"/><rect x="962" y="215" width="11.5" height="3.5" rx="0.8" fill="#6e8eab"/><rect x="962" y="218.2" width="24" height="2" fill="#8a9aa6"/><rect x="962" y="218.2" width="11.5" height="2" fill="#5f7f9c"/><rect x="962" y="220" width="24" height="15" fill="#34566f"/><rect x="962" y="241" width="11.5" height="3.5" rx="0.8" fill="#6e8eab"/><rect x="962" y="244.2" width="24" height="2" fill="#8a9aa6"/><rect x="962" y="244.2" width="11.5" height="2" fill="#5f7f9c"/><rect x="962" y="246" width="24" height="15" fill="#34566f"/><rect x="988" y="267" width="24" height="20" fill="#34566f"/><rect x="988" y="267" width="24" height="2" fill="#64839f"/><rect x="988" y="269" width="24" height="3" fill="#8a9aa6"/><rect x="990.7" y="274" width="8" height="1.2" fill="#fff"/><rect x="1000.2" y="274" width="9" height="3" fill="#fff"/><rect x="962" y="293" width="11.5" height="3.5" rx="0.8" fill="#6e8eab"/><rect x="962" y="296.2" width="24" height="2" fill="#8a9aa6"/><rect x="962" y="296.2" width="11.5" height="2" fill="#5f7f9c"/><rect x="962" y="298" width="24" height="15" fill="#34566f"/><rect x="988" y="319" width="24" height="20" fill="#34566f"/><rect x="988" y="319" width="24" height="2" fill="#64839f"/><rect x="988" y="321" width="24" height="3" fill="#8a9aa6"/><rect x="990.7" y="326" width="8" height="1.2" fill="#fff"/><rect x="1000.2" y="326" width="9" height="3" fill="#fff"/><rect x="962" y="345" width="11.5" height="3.5" rx="0.8" fill="#6e8eab"/><rect x="962" y="348.2" width="24" height="2" fill="#8a9aa6"/><rect x="962" y="348.2" width="11.5" height="2" fill="#5f7f9c"/><rect x="962" y="350" width="24" height="15" fill="#34566f"/><rect x="988" y="371" width="24" height="20" fill="#34566f"/><rect x="988" y="371" width="24" height="2" fill="#64839f"/><rect x="988" y="373" width="24" height="3" fill="#8a9aa6"/><rect x="990.7" y="378" width="8" height="1.2" fill="#fff"/><rect x="1000.2" y="378" width="9" height="3" fill="#fff"/><rect x="962" y="397" width="11.5" height="3.5" rx="0.8" fill="#6e8eab"/><rect x="962" y="400.2" width="24" height="2" fill="#8a9aa6"/><rect x="962" y="400.2" width="11.5" height="2" fill="#5f7f9c"/><rect x="962" y="402" width="24" height="15" fill="#34566f"/><rect x="883" y="409" width="394" height="4" fill="#cfd1dc"/><rect x="880" y="413" width="397" height="6" fill="#eeeef2"/><rect x="947" y="421" width="1" height="1" fill="#a8a8b0"/><rect x="951" y="421" width="1" height="1" fill="#a8a8b0"/><rect x="955" y="421" width="1" height="1" fill="#a8a8b0"/><rect x="959" y="421" width="1" height="1" fill="#a8a8b0"/><rect x="963" y="421" width="1" height="1" fill="#a8a8b0"/><rect x="967" y="421" width="1" height="1" fill="#a8a8b0"/><rect x="971" y="421" width="1" height="1" fill="#a8a8b0"/><rect x="975" y="421" width="1" height="1" fill="#a8a8b0"/><rect x="979" y="421" width="1" height="1" fill="#a8a8b0"/><rect x="983" y="421" width="1" height="1" fill="#a8a8b0"/><rect x="987" y="421" width="1" height="1" fill="#a8a8b0"/><rect x="991" y="421" width="1" height="1" fill="#a8a8b0"/><rect x="995" y="421" width="1" height="1" fill="#a8a8b0"/><rect x="999" y="421" width="1" height="1" fill="#a8a8b0"/><rect x="1003" y="421" width="1" height="1" fill="#a8a8b0"/><rect x="1007" y="421" width="1" height="1" fill="#a8a8b0"/><rect x="1011" y="421" width="1" height="1" fill="#a8a8b0"/><rect x="1015" y="421" width="1" height="1" fill="#a8a8b0"/><rect x="1019" y="421" width="1" height="1" fill="#a8a8b0"/><rect x="1023" y="421" width="1" height="1" fill="#a8a8b0"/><rect x="1027" y="421" width="1" height="1" fill="#a8a8b0"/><rect x="1031" y="421" width="1" height="1" fill="#a8a8b0"/><rect x="1035" y="421" width="1" height="1" fill="#a8a8b0"/><rect x="1039" y="421" width="1" height="1" fill="#a8a8b0"/><rect x="1043" y="421" width="1" height="1" fill="#a8a8b0"/><rect x="1047" y="421" width="1" height="1" fill="#a8a8b0"/><rect x="1051" y="421" width="1" height="1" fill="#a8a8b0"/><rect x="1055" y="421" width="1" height="1" fill="#a8a8b0"/><rect x="1059" y="421" width="1" height="1" fill="#a8a8b0"/><rect x="1063" y="421" width="1" height="1" fill="#a8a8b0"/><rect x="1067" y="421" width="1" height="1" fill="#a8a8b0"/><rect x="1071" y="421" width="1" height="1" fill="#a8a8b0"/><rect x="1075" y="421" width="1" height="1" fill="#a8a8b0"/><rect x="1079" y="421" width="1" height="1" fill="#a8a8b0"/><rect x="1083" y="421" width="1" height="1" fill="#a8a8b0"/><rect x="1087" y="421" width="1" height="1" fill="#a8a8b0"/><rect x="1091" y="421" width="1" height="1" fill="#a8a8b0"/><rect x="1095" y="421" width="1" height="1" fill="#a8a8b0"/><rect x="1099" y="421" width="1" height="1" fill="#a8a8b0"/><rect x="1103" y="421" width="1" height="1" fill="#a8a8b0"/><rect x="1107" y="421" width="1" height="1" fill="#a8a8b0"/><rect x="1111" y="421" width="1" height="1" fill="#a8a8b0"/><rect x="1115" y="421" width="1" height="1" fill="#a8a8b0"/><rect x="1119" y="421" width="1" height="1" fill="#a8a8b0"/><rect x="1123" y="421" width="1" height="1" fill="#a8a8b0"/><rect x="1127" y="421" width="1" height="1" fill="#a8a8b0"/><rect x="1131" y="421" width="1" height="1" fill="#a8a8b0"/><rect x="1135" y="421" width="1" height="1" fill="#a8a8b0"/><rect x="1139" y="421" width="1" height="1" fill="#a8a8b0"/><rect x="1143" y="421" width="1" height="1" fill="#a8a8b0"/><rect x="1147" y="421" width="1" height="1" fill="#a8a8b0"/><rect x="1151" y="421" width="1" height="1" fill="#a8a8b0"/><rect x="1155" y="421" width="1" height="1" fill="#a8a8b0"/><rect x="1159" y="421" width="1" height="1" fill="#a8a8b0"/><rect x="1163" y="421" width="1" height="1" fill="#a8a8b0"/><rect x="1167" y="421" width="1" height="1" fill="#a8a8b0"/><rect x="1171" y="421" width="1" height="1" fill="#a8a8b0"/><rect x="1175" y="421" width="1" height="1" fill="#a8a8b0"/><rect x="1179" y="421" width="1" height="1" fill="#a8a8b0"/><rect x="1183" y="421" width="1" height="1" fill="#a8a8b0"/><rect x="1187" y="421" width="1" height="1" fill="#a8a8b0"/><rect x="1191" y="421" width="1" height="1" fill="#a8a8b0"/><rect x="1195" y="421" width="1" height="1" fill="#a8a8b0"/><rect x="1199" y="421" width="1" height="1" fill="#a8a8b0"/><rect x="1203" y="421" width="1" height="1" fill="#a8a8b0"/><rect x="1207" y="421" width="1" height="1" fill="#a8a8b0"/><rect x="1211" y="421" width="1" height="1" fill="#a8a8b0"/><rect x="1215" y="421" width="1" height="1" fill="#a8a8b0"/><rect x="1219" y="421" width="1" height="1" fill="#a8a8b0"/><rect x="1223" y="421" width="1" height="1" fill="#a8a8b0"/><rect x="1227" y="421" width="1" height="1" fill="#a8a8b0"/><rect x="1231" y="421" width="1" height="1" fill="#a8a8b0"/><rect x="1235" y="421" width="1" height="1" fill="#a8a8b0"/><rect x="949" y="423" width="1" height="1" fill="#a8a8b0"/><rect x="953" y="423" width="1" height="1" fill="#a8a8b0"/><rect x="957" y="423" width="1" height="1" fill="#a8a8b0"/><rect x="961" y="423" width="1" height="1" fill="#a8a8b0"/><rect x="965" y="423" width="1" height="1" fill="#a8a8b0"/><rect x="969" y="423" width="1" height="1" fill="#a8a8b0"/><rect x="973" y="423" width="1" height="1" fill="#a8a8b0"/><rect x="977" y="423" width="1" height="1" fill="#a8a8b0"/><rect x="981" y="423" width="1" height="1" fill="#a8a8b0"/><rect x="985" y="423" width="1" height="1" fill="#a8a8b0"/><rect x="989" y="423" width="1" height="1" fill="#a8a8b0"/><rect x="993" y="423" width="1" height="1" fill="#a8a8b0"/><rect x="997" y="423" width="1" height="1" fill="#a8a8b0"/><rect x="1001" y="423" width="1" height="1" fill="#a8a8b0"/><rect x="1005" y="423" width="1" height="1" fill="#a8a8b0"/><rect x="1009" y="423" width="1" height="1" fill="#a8a8b0"/><rect x="1013" y="423" width="1" height="1" fill="#a8a8b0"/><rect x="1017" y="423" width="1" height="1" fill="#a8a8b0"/><rect x="1021" y="423" width="1" height="1" fill="#a8a8b0"/><rect x="1025" y="423" width="1" height="1" fill="#a8a8b0"/><rect x="1029" y="423" width="1" height="1" fill="#a8a8b0"/><rect x="1033" y="423" width="1" height="1" fill="#a8a8b0"/><rect x="1037" y="423" width="1" height="1" fill="#a8a8b0"/><rect x="1041" y="423" width="1" height="1" fill="#a8a8b0"/><rect x="1045" y="423" width="1" height="1" fill="#a8a8b0"/><rect x="1049" y="423" width="1" height="1" fill="#a8a8b0"/><rect x="1053" y="423" width="1" height="1" fill="#a8a8b0"/><rect x="1057" y="423" width="1" height="1" fill="#a8a8b0"/><rect x="1061" y="423" width="1" height="1" fill="#a8a8b0"/><rect x="1065" y="423" width="1" height="1" fill="#a8a8b0"/><rect x="1069" y="423" width="1" height="1" fill="#a8a8b0"/><rect x="1073" y="423" width="1" height="1" fill="#a8a8b0"/><rect x="1077" y="423" width="1" height="1" fill="#a8a8b0"/><rect x="1081" y="423" width="1" height="1" fill="#a8a8b0"/><rect x="1085" y="423" width="1" height="1" fill="#a8a8b0"/><rect x="1089" y="423" width="1" height="1" fill="#a8a8b0"/><rect x="1093" y="423" width="1" height="1" fill="#a8a8b0"/><rect x="1097" y="423" width="1" height="1" fill="#a8a8b0"/><rect x="1101" y="423" width="1" height="1" fill="#a8a8b0"/><rect x="1105" y="423" width="1" height="1" fill="#a8a8b0"/><rect x="1109" y="423" width="1" height="1" fill="#a8a8b0"/><rect x="1113" y="423" width="1" height="1" fill="#a8a8b0"/><rect x="1117" y="423" width="1" height="1" fill="#a8a8b0"/><rect x="1121" y="423" width="1" height="1" fill="#a8a8b0"/><rect x="1125" y="423" width="1" height="1" fill="#a8a8b0"/><rect x="1129" y="423" width="1" height="1" fill="#a8a8b0"/><rect x="1133" y="423" width="1" height="1" fill="#a8a8b0"/><rect x="1137" y="423" width="1" height="1" fill="#a8a8b0"/><rect x="1141" y="423" width="1" height="1" fill="#a8a8b0"/><rect x="1145" y="423" width="1" height="1" fill="#a8a8b0"/><rect x="1149" y="423" width="1" height="1" fill="#a8a8b0"/><rect x="1153" y="423" width="1" height="1" fill="#a8a8b0"/><rect x="1157" y="423" width="1" height="1" fill="#a8a8b0"/><rect x="1161" y="423" width="1" height="1" fill="#a8a8b0"/><rect x="1165" y="423" width="1" height="1" fill="#a8a8b0"/><rect x="1169" y="423" width="1" height="1" fill="#a8a8b0"/><rect x="1173" y="423" width="1" height="1" fill="#a8a8b0"/><rect x="1177" y="423" width="1" height="1" fill="#a8a8b0"/><rect x="1181" y="423" width="1" height="1" fill="#a8a8b0"/><rect x="1185" y="423" width="1" height="1" fill="#a8a8b0"/><rect x="1189" y="423" width="1" height="1" fill="#a8a8b0"/><rect x="1193" y="423" width="1" height="1" fill="#a8a8b0"/><rect x="1197" y="423" width="1" height="1" fill="#a8a8b0"/><rect x="1201" y="423" width="1" height="1" fill="#a8a8b0"/><rect x="1205" y="423" width="1" height="1" fill="#a8a8b0"/><rect x="1209" y="423" width="1" height="1" fill="#a8a8b0"/><rect x="1213" y="423" width="1" height="1" fill="#a8a8b0"/><rect x="1217" y="423" width="1" height="1" fill="#a8a8b0"/><rect x="1221" y="423" width="1" height="1" fill="#a8a8b0"/><rect x="1225" y="423" width="1" height="1" fill="#a8a8b0"/><rect x="1229" y="423" width="1" height="1" fill="#a8a8b0"/><rect x="1233" y="423" width="1" height="1" fill="#a8a8b0"/><rect x="1237" y="423" width="1" height="1" fill="#a8a8b0"/><rect x="947" y="425" width="1" height="1" fill="#a8a8b0"/><rect x="951" y="425" width="1" height="1" fill="#a8a8b0"/><rect x="955" y="425" width="1" height="1" fill="#a8a8b0"/><rect x="959" y="425" width="1" height="1" fill="#a8a8b0"/><rect x="963" y="425" width="1" height="1" fill="#a8a8b0"/><rect x="967" y="425" width="1" height="1" fill="#a8a8b0"/><rect x="971" y="425" width="1" height="1" fill="#a8a8b0"/><rect x="975" y="425" width="1" height="1" fill="#a8a8b0"/><rect x="979" y="425" width="1" height="1" fill="#a8a8b0"/><rect x="983" y="425" width="1" height="1" fill="#a8a8b0"/><rect x="987" y="425" width="1" height="1" fill="#a8a8b0"/><rect x="991" y="425" width="1" height="1" fill="#a8a8b0"/><rect x="995" y="425" width="1" height="1" fill="#a8a8b0"/><rect x="999" y="425" width="1" height="1" fill="#a8a8b0"/><rect x="1003" y="425" width="1" height="1" fill="#a8a8b0"/><rect x="1007" y="425" width="1" height="1" fill="#a8a8b0"/><rect x="1011" y="425" width="1" height="1" fill="#a8a8b0"/><rect x="1015" y="425" width="1" height="1" fill="#a8a8b0"/><rect x="1019" y="425" width="1" height="1" fill="#a8a8b0"/><rect x="1023" y="425" width="1" height="1" fill="#a8a8b0"/><rect x="1027" y="425" width="1" height="1" fill="#a8a8b0"/><rect x="1031" y="425" width="1" height="1" fill="#a8a8b0"/><rect x="1035" y="425" width="1" height="1" fill="#a8a8b0"/><rect x="1039" y="425" width="1" height="1" fill="#a8a8b0"/><rect x="1043" y="425" width="1" height="1" fill="#a8a8b0"/><rect x="1047" y="425" width="1" height="1" fill="#a8a8b0"/><rect x="1051" y="425" width="1" height="1" fill="#a8a8b0"/><rect x="1055" y="425" width="1" height="1" fill="#a8a8b0"/><rect x="1059" y="425" width="1" height="1" fill="#a8a8b0"/><rect x="1063" y="425" width="1" height="1" fill="#a8a8b0"/><rect x="1067" y="425" width="1" height="1" fill="#a8a8b0"/><rect x="1071" y="425" width="1" height="1" fill="#a8a8b0"/><rect x="1075" y="425" width="1" height="1" fill="#a8a8b0"/><rect x="1079" y="425" width="1" height="1" fill="#a8a8b0"/><rect x="1083" y="425" width="1" height="1" fill="#a8a8b0"/><rect x="1087" y="425" width="1" height="1" fill="#a8a8b0"/><rect x="1091" y="425" width="1" height="1" fill="#a8a8b0"/><rect x="1095" y="425" width="1" height="1" fill="#a8a8b0"/><rect x="1099" y="425" width="1" height="1" fill="#a8a8b0"/><rect x="1103" y="425" width="1" height="1" fill="#a8a8b0"/><rect x="1107" y="425" width="1" height="1" fill="#a8a8b0"/><rect x="1111" y="425" width="1" height="1" fill="#a8a8b0"/><rect x="1115" y="425" width="1" height="1" fill="#a8a8b0"/><rect x="1119" y="425" width="1" height="1" fill="#a8a8b0"/><rect x="1123" y="425" width="1" height="1" fill="#a8a8b0"/><rect x="1127" y="425" width="1" height="1" fill="#a8a8b0"/><rect x="1131" y="425" width="1" height="1" fill="#a8a8b0"/><rect x="1135" y="425" width="1" height="1" fill="#a8a8b0"/><rect x="1139" y="425" width="1" height="1" fill="#a8a8b0"/><rect x="1143" y="425" width="1" height="1" fill="#a8a8b0"/><rect x="1147" y="425" width="1" height="1" fill="#a8a8b0"/><rect x="1151" y="425" width="1" height="1" fill="#a8a8b0"/><rect x="1155" y="425" width="1" height="1" fill="#a8a8b0"/><rect x="1159" y="425" width="1" height="1" fill="#a8a8b0"/><rect x="1163" y="425" width="1" height="1" fill="#a8a8b0"/><rect x="1167" y="425" width="1" height="1" fill="#a8a8b0"/><rect x="1171" y="425" width="1" height="1" fill="#a8a8b0"/><rect x="1175" y="425" width="1" height="1" fill="#a8a8b0"/><rect x="1179" y="425" width="1" height="1" fill="#a8a8b0"/><rect x="1183" y="425" width="1" height="1" fill="#a8a8b0"/><rect x="1187" y="425" width="1" height="1" fill="#a8a8b0"/><rect x="1191" y="425" width="1" height="1" fill="#a8a8b0"/><rect x="1195" y="425" width="1" height="1" fill="#a8a8b0"/><rect x="1199" y="425" width="1" height="1" fill="#a8a8b0"/><rect x="1203" y="425" width="1" height="1" fill="#a8a8b0"/><rect x="1207" y="425" width="1" height="1" fill="#a8a8b0"/><rect x="1211" y="425" width="1" height="1" fill="#a8a8b0"/><rect x="1215" y="425" width="1" height="1" fill="#a8a8b0"/><rect x="1219" y="425" width="1" height="1" fill="#a8a8b0"/><rect x="1223" y="425" width="1" height="1" fill="#a8a8b0"/><rect x="1227" y="425" width="1" height="1" fill="#a8a8b0"/><rect x="1231" y="425" width="1" height="1" fill="#a8a8b0"/><rect x="1235" y="425" width="1" height="1" fill="#a8a8b0"/><rect x="1246" y="418.8" width="1" height="5.2" fill="#111"/><rect x="1249.2" y="418.8" width="2" height="5.2" fill="#111"/><rect x="1246" y="418.8" width="5" height="1" fill="#111"/><rect x="1245" y="423.8" width="7.2" height="1.1" fill="#111"/><rect x="1248" y="424.8" width="1.1" height="2.4" fill="#111"/><path d="M1260 420 L1268.5 426.5 M1268.5 420 L1260 426.5" stroke="#111" stroke-width="1.35"/><rect x="883.5" y="435.5" width="25" height="25" fill="#f4f2f4" stroke="#3399ff"/><rect x="886" y="438" width="8.5" height="8.5" fill="#34566f"/><rect x="886" y="449" width="8.5" height="8.5" fill="#34566f"/><rect x="889.5" y="446" width="1.2" height="3.5" fill="#34566f"/><path d="M890.2 440.3 l2 2 l-2 2 l-2 -2 z" fill="#3aa57a"/><path d="M890.2 451.3 l2 2 l-2 2 l-2 -2 z" fill="#1a9be0"/><rect x="896" y="439" width="9.5" height="1.3" fill="#3aa57a"/><rect x="896" y="441.5" width="7.5" height="1.2" fill="#9fb8aa"/><rect x="896" y="444" width="6" height="1.2" fill="#9fb8aa"/><rect x="896" y="450" width="9.5" height="1.3" fill="#1a9be0"/><rect x="896" y="452.5" width="7.5" height="1.2" fill="#9cc3d9"/><rect x="896" y="455" width="6" height="1.2" fill="#9cc3d9"/><rect x="911" y="437" width="1" height="24" fill="#ccd0dc"/><rect x="918" y="439.3" width="19" height="1.6" fill="#34566f"/><rect x="918" y="443.5" width="8" height="1.2" fill="#9fb8aa"/><rect x="929" y="443.5" width="8" height="1.2" fill="#9fb8aa"/><rect x="918" y="446.0" width="8" height="1.2" fill="#3aa57a"/><rect x="929" y="446.0" width="8" height="1.2" fill="#3aa57a"/><rect x="918" y="448.5" width="8" height="1.2" fill="#9fb8aa"/><rect x="929" y="448.5" width="8" height="1.2" fill="#9fb8aa"/><rect x="918" y="451.0" width="8" height="1.2" fill="#9cc3d9"/><rect x="929" y="451.0" width="8" height="1.2" fill="#9cc3d9"/><rect x="918" y="453.5" width="8" height="1.2" fill="#1a9be0"/><rect x="929" y="453.5" width="8" height="1.2" fill="#1a9be0"/><rect x="943" y="437" width="1" height="24" fill="#ccd0dc"/><path d="M951 446.5 L954 438.3 H955.5 L958.5 446.5 H956.8 L956.1 444.5 H953.4 L952.7 446.5 Z M953.9 443 H955.6 L954.75 440.4 Z" fill="#3aa57a" fill-rule="evenodd"/><path d="M951.3 449 H958.3 V450.5 L953.6 455.8 H958.5 V457.3 H951 V455.8 L955.7 450.5 H951.3 Z" fill="#e04848"/><rect x="963.3" y="438.3" width="1.6" height="1.8" fill="#34566f"/><rect x="963.3" y="441.5" width="1.6" height="13" fill="#34566f"/><path d="M960 451.5 L964.1 456.5 L968.2 451.5" fill="none" stroke="#34566f" stroke-width="1.7"/><rect x="975" y="437" width="1" height="24" fill="#ccd0dc"/><rect x="979.5" y="437.5" width="149" height="22" fill="#eeeef2" stroke="#c6c6c6"/><path d="M1117 447 h7 l-3.5 3 z" fill="#c2c2c2"/><rect x="884.5" y="469.5" width="8" height="8" fill="#eeeef2" stroke="#1e1e1e"/><rect x="886" y="473" width="5" height="1" fill="#000"/><rect x="888" y="471" width="1" height="5" fill="#000"/><rect x="884.5" y="488.5" width="8" height="8" fill="#eeeef2" stroke="#1e1e1e"/><rect x="886" y="492" width="5" height="1" fill="#000"/><rect x="896" y="502" width="365" height="18" fill="#f5f5f5"/><rect x="1081" y="502" width="1" height="18" fill="#e8e8ea"/><rect x="896" y="521" width="365" height="18" fill="#f5f5f5"/><rect x="1081" y="521" width="1" height="18" fill="#e8e8ea"/><rect x="884.5" y="545.5" width="8" height="8" fill="#eeeef2" stroke="#1e1e1e"/><rect x="886" y="549" width="5" height="1" fill="#000"/><rect x="896" y="559" width="365" height="18" fill="#f5f5f5"/><rect x="1081" y="559" width="1" height="18" fill="#e8e8ea"/><rect x="896" y="578" width="365" height="18" fill="#f5f5f5"/><rect x="1081" y="578" width="1" height="18" fill="#e8e8ea"/><rect x="896" y="597" width="365" height="18" fill="#f5f5f5"/><rect x="1081" y="597" width="1" height="18" fill="#e8e8ea"/><rect x="896" y="616" width="365" height="18" fill="#f5f5f5"/><rect x="1081" y="616" width="1" height="18" fill="#e8e8ea"/><rect x="896" y="635" width="365" height="18" fill="#f5f5f5"/><rect x="1081" y="635" width="1" height="18" fill="#e8e8ea"/><rect x="884.5" y="659.5" width="8" height="8" fill="#eeeef2" stroke="#1e1e1e"/><rect x="886" y="663" width="5" height="1" fill="#000"/><rect x="896" y="673" width="365" height="3" fill="#f5f5f5"/><rect x="1081" y="673" width="1" height="3" fill="#e8e8ea"/><rect x="1227.5" y="521.5" width="16" height="17" fill="#fff" stroke="#d0d4e0"/><rect x="1231" y="532.5" width="2" height="2" fill="#111"/><rect x="1234.5" y="532.5" width="2" height="2" fill="#111"/><rect x="1238" y="532.5" width="2" height="2" fill="#111"/><rect x="1244" y="521" width="17" height="18" fill="#fff"/><path d="M1248.3 528 h9 l-4.5 5 z" fill="#555"/><rect x="1261" y="464" width="1" height="212" fill="#fff"/><rect x="1262" y="464" width="15" height="212" fill="#efeff2"/><rect x="1262" y="481" width="15" height="103" fill="#c8c8c8"/><path d="M1266.2 475.5 L1269.7 471 L1273.2 475.5" fill="none" stroke="#555" stroke-width="1.9"/><path d="M1266.2 665.5 L1269.7 670 L1273.2 665.5" fill="none" stroke="#555" stroke-width="1.9"/><rect x="882" y="676" width="395" height="1" fill="#f5f5f5"/><rect x="882" y="677" width="395" height="2" fill="#e6e6e8"/><rect x="882" y="679" width="395" height="59" fill="#f5f5f5"/></svg><div class="t" style="left:889px;top:87.5px;letter-spacing:-0.1px">Development</div>
<div class="t" style="left:918.5px;top:112.5px;letter-spacing:-0.3px">Filter:</div>
<div class="a" style="left:880px;top:134px;width:382px;height:275px;overflow:hidden"><div class="t" style="left:59px;top:7.1px;font-size:13px;color:#000;letter-spacing:-0.35px">SUPPORT</div>
<div class="t" style="left:85px;top:33.1px;font-size:13px;color:#000;letter-spacing:0.6px">1.Users</div>
<div class="t" style="left:85px;top:59.1px;font-size:13px;color:#000;letter-spacing:0.94px">2.Objects</div>
<div class="t" style="left:126px;top:85.1px;font-size:13px;color:#000;letter-spacing:1.08px">1000 Ticket</div>
<div class="t" style="left:126px;top:111.1px;font-size:13px;color:#000;letter-spacing:1.05px">1100 Status</div>
<div class="t" style="left:152.5px;top:137.1px;font-size:13px;color:#000;letter-spacing:1.12px">1101 Status type</div>
<div class="t" style="left:126px;top:163.1px;font-size:13px;color:#000;letter-spacing:0.76px">1200 Comment</div>
<div class="t" style="left:152.5px;top:189.1px;font-size:13px;color:#000;letter-spacing:0.86px">1201 Comment type</div>
<div class="t" style="left:126px;top:215.1px;font-size:13px;color:#000;letter-spacing:0.78px">1300 Customer</div>
<div class="t" style="left:152.5px;top:241.1px;font-size:13px;color:#000;letter-spacing:0.7px">1301 Customer</div>
<div class="t" style="left:126px;top:267.1px;font-size:13px;color:#000;letter-spacing:0.9px">1400 User</div>
</div><div class="t" style="left:888.5px;top:416.5px;letter-spacing:-0.2px">Properties</div>
<div class="t" style="left:899.5px;top:467.3px;font-weight:bold;letter-spacing:-0.15px">Object</div>
<div class="t" style="left:899.5px;top:486.3px;font-weight:bold;letter-spacing:-0.15px">Format</div>
<div class="t" style="left:899.5px;top:505.3px;letter-spacing:-0.12px">External Connection</div>
<div class="t" style="left:899.5px;top:524.3px;letter-spacing:-0.12px">Data Source</div>
<div class="t" style="left:1085px;top:524.3px;">t_comment_types</div>
<div class="t" style="left:899.5px;top:543.3px;font-weight:bold;letter-spacing:-0.45px">System Fields</div>
<div class="t" style="left:899.5px;top:562.3px;letter-spacing:-0.12px">Record ID</div>
<div class="t" style="left:1085px;top:562.3px;">idkart</div>
<div class="t" style="left:899.5px;top:581.3px;letter-spacing:-0.12px">Date &amp; Time (Created)</div>
<div class="t" style="left:899.5px;top:600.3px;letter-spacing:-0.12px">Date &amp; Time (Updated)</div>
<div class="t" style="left:899.5px;top:619.3px;letter-spacing:-0.12px">Date &amp; Time (Closed)</div>
<div class="t" style="left:899.5px;top:638.3px;letter-spacing:-0.12px">User ID</div>
<div class="t" style="left:899.5px;top:657.3px;font-weight:bold;letter-spacing:-0.7px">Caching</div>
<div class="t" style="left:887.5px;top:684.8px;font-weight:bold;letter-spacing:-0.2px">Data Source</div>
<!--/R-->

<!-- status bar -->
<div class="a" style="left:0;top:738px;width:1280px;height:21px;background:#007acc"></div>
<div class="t" style="left:4.5px;top:742.8px;color:#fff;letter-spacing:0.15px">Main window</div>
<div class="t" style="left:1104px;top:743px;color:#fff;letter-spacing:-0.6px">5.4.8.24</div>
<svg class="a" style="left:0;top:0" width="1280" height="759" viewBox="0 0 1280 759"><rect x="1275" y="746" width="1.2" height="1.2" fill="#b5d6f2"/><rect x="1275" y="748" width="1.2" height="1.2" fill="#b5d6f2"/><rect x="1273" y="748" width="1.2" height="1.2" fill="#b5d6f2"/><rect x="1275" y="750" width="1.2" height="1.2" fill="#b5d6f2"/><rect x="1273" y="750" width="1.2" height="1.2" fill="#b5d6f2"/><rect x="1271" y="750" width="1.2" height="1.2" fill="#b5d6f2"/><rect x="1275" y="752" width="1.2" height="1.2" fill="#b5d6f2"/><rect x="1273" y="752" width="1.2" height="1.2" fill="#b5d6f2"/><rect x="1271" y="752" width="1.2" height="1.2" fill="#b5d6f2"/><rect x="1269" y="752" width="1.2" height="1.2" fill="#b5d6f2"/></svg>
</body></html>
